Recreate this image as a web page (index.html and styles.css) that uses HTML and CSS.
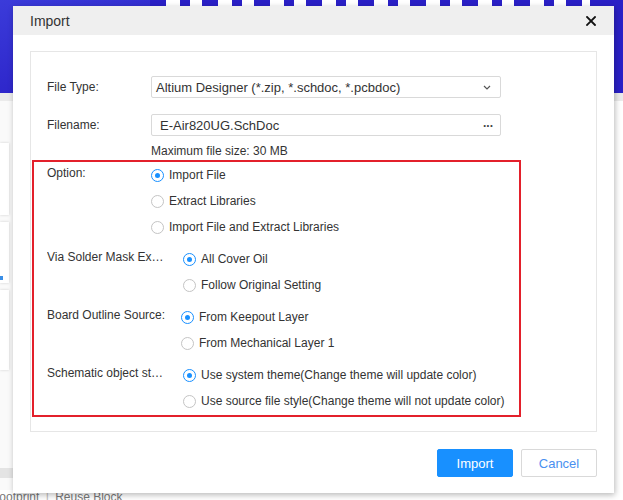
FILE: index.html
```html
<!DOCTYPE html>
<html lang="en">
<head>
<meta charset="utf-8">
<title>Import</title>
<link rel="stylesheet" href="styles.css">
</head>
<body>
<div class="page">
  <div class="banner"><div class="stripes"></div></div>
  <div class="subbar"></div>
  <div class="workspace">
    <div class="sidebar">
      <div class="card card-a"></div>
      <div class="card card-b"><span class="card-mark"></span></div>
      <div class="card card-c"></div>
      <div class="sidebar-bar"></div>
    </div>
    <div class="main"></div>
  </div>
  <div class="footer-links">Footprint <span class="sep">|</span> Reuse Block</div>
</div>

<div class="modal">
  <div class="modal-header">
    <span class="modal-title">Import</span>
    <span class="close">
      <svg width="10" height="10" viewBox="0 0 10 10"><path d="M1 1L9 9M9 1L1 9" stroke="#111" stroke-width="1.8" stroke-linecap="square" fill="none"/></svg>
    </span>
  </div>
  <div class="modal-body">
    <div class="panel">
      <div class="field-row">
        <div class="field-label">File Type:</div>
        <div class="select">
          <span>Altium Designer (*.zip, *.schdoc, *.pcbdoc)</span>
          <svg width="8" height="5" viewBox="0 0 8 5"><path d="M1 1L4 4L7 1" stroke="#555" stroke-width="1.2" fill="none"/></svg>
        </div>
      </div>
      <div class="field-row field-row-next">
        <div class="field-label">Filename:</div>
        <div class="input">
          <span>E-Air820UG.SchDoc</span>
          <span class="dots">...</span>
        </div>
      </div>
      <div class="hint">Maximum file size: 30 MB</div>

      <div class="highlight">
        <div class="group">
          <div class="group-label label-option">Option:</div>
          <div class="radios">
            <div class="radio-row"><span class="radio checked"></span>Import File</div>
            <div class="radio-row"><span class="radio"></span>Extract Libraries</div>
            <div class="radio-row"><span class="radio"></span>Import File and Extract Libraries</div>
          </div>
        </div>
        <div class="group">
          <div class="group-label label-via">Via Solder Mask Ex…</div>
          <div class="radios">
            <div class="radio-row"><span class="radio checked"></span>All Cover Oil</div>
            <div class="radio-row"><span class="radio"></span>Follow Original Setting</div>
          </div>
        </div>
        <div class="group">
          <div class="group-label label-board">Board Outline Source:</div>
          <div class="radios">
            <div class="radio-row"><span class="radio checked"></span>From Keepout Layer</div>
            <div class="radio-row"><span class="radio"></span>From Mechanical Layer 1</div>
          </div>
        </div>
        <div class="group">
          <div class="group-label label-schem">Schematic object st…</div>
          <div class="radios">
            <div class="radio-row"><span class="radio checked"></span>Use system theme(Change theme will update color)</div>
            <div class="radio-row"><span class="radio"></span>Use source file style(Change theme will not update color)</div>
          </div>
        </div>
      </div>
    </div>
    <div class="modal-footer">
      <button class="btn btn-primary">Import</button>
      <button class="btn btn-default">Cancel</button>
    </div>
  </div>
</div>
</body>
</html>
```

FILE: styles.css
```css
* { box-sizing: border-box; }

body {
  margin: 0;
  width: 623px;
  height: 500px;
  overflow: hidden;
  position: relative;
  background: #fff;
  font-family: "Liberation Sans", Arial, sans-serif;
  font-size: 12px;
  color: #333;
}

/* ---------- background page ---------- */
.page {
  display: flex;
  flex-direction: column;
  height: 500px;
}

.banner {
  height: 93px;
  background: #2a20c6;
  background-image: linear-gradient(160deg, rgba(90,110,255,0.35) 0, rgba(42,32,198,0) 40%);
}

.stripes {
  margin-left: 150px;
  width: 440px;
  height: 6px;
  background-color: #2a20c6;
  background-image: repeating-linear-gradient(to right, #2a20c6 0 16px, #ffffff 16px 30px, #2a20c6 30px 40px, #ffffff 40px 52px);
}

.subbar {
  height: 8px;
  background: #ebebeb;
}

.workspace {
  display: flex;
  height: 389px;
}

.sidebar {
  width: 14px;
  border-right: 1px solid #d6d6d6;
  background: #fafafa;
  display: flex;
  flex-direction: column;
  gap: 7px;
  padding-top: 42px;
}

.card {
  width: 9px;
  background: #fff;
  box-shadow: 0 0 3px rgba(0,0,0,0.18);
  position: relative;
}
.card-a { height: 72px; }
.card-b { height: 61px; }
.card-c { height: 80px; }

.card-mark {
  position: absolute;
  left: 0;
  top: 54px;
  width: 3px;
  height: 4px;
  background: #3a8ee6;
}

.sidebar-bar {
  margin-top: 91px;
  height: 10px;
  width: 13px;
  background: #e4e4e4;
}

.main { flex: 1; background: #fff; }

.footer-links {
  height: 10px;
  line-height: 14px;
  font-size: 12px;
  color: #777;
  text-indent: -8px;
  white-space: nowrap;
}
.sep { color: #bbb; padding: 0 3px; }

/* ---------- modal ---------- */
.modal {
  position: absolute;
  left: 13px;
  top: 6px;
  width: 601px;
  height: 487px;
  background: #fff;
  box-shadow: 1px 2px 6px rgba(0,0,0,0.28);
  display: flex;
  flex-direction: column;
}

.modal-header {
  height: 29px;
  background: #efefef;
  display: flex;
  align-items: center;
  justify-content: space-between;
  padding: 0 18px 0 17px;
}

.modal-title {
  font-size: 14px;
  color: #333;
}

.close {
  display: flex;
  width: 10px;
  height: 10px;
}

.modal-body {
  padding: 16px 17px 0 17px;
}

.panel {
  border: 1px solid #e6e6e6;
  padding: 24px 0 14px 16px;
}

.field-row {
  display: flex;
  align-items: center;
}
.field-row-next { margin-top: 16px; }

.field-label {
  width: 104px;
  color: #333;
}

.select, .input {
  width: 350px;
  height: 22px;
  border: 1px solid #d9d9d9;
  border-radius: 2px;
  display: flex;
  align-items: center;
  justify-content: space-between;
  color: #333;
}

.select {
  padding: 0 9px 0 4px;
  font-size: 13px;
}

.input {
  padding: 0 7px 0 8px;
  font-size: 13px;
}

.dots {
  font-weight: bold;
  font-size: 12px;
  color: #444;
  margin-top: -4px;
}

.hint {
  margin-top: 8px;
  padding-left: 104px;
  line-height: 14px;
  color: #333;
}

.highlight {
  margin-top: 2px;
  margin-left: -15px;
  width: 489px;
  border: 2px solid #e3202b;
  padding: 0 0 1px 13px;
}

.group {
  display: flex;
  align-items: flex-start;
}
.group + .group { margin-top: 6px; }

.group-label {
  line-height: 22px;
  white-space: nowrap;
  overflow: hidden;
}
.label-option { width: 104px; }
.label-via { width: 136px; }
.label-board { width: 134px; }
.label-schem { width: 136px; }

.radios {
  display: flex;
  flex-direction: column;
}

.radio-row {
  height: 26px;
  display: flex;
  align-items: center;
  white-space: nowrap;
  color: #333;
}

.radio {
  width: 13px;
  height: 13px;
  margin-right: 5px;
  border: 1px solid #c4c4c4;
  border-radius: 50%;
  display: grid;
  place-items: center;
  background: #fff;
}

.radio.checked { border-color: #1890ff; }
.radio.checked::after {
  content: "";
  width: 5px;
  height: 5px;
  border-radius: 50%;
  background: #1890ff;
}

.modal-footer {
  display: flex;
  justify-content: flex-end;
  gap: 8px;
  padding-top: 17px;
}

.btn {
  width: 76px;
  height: 28px;
  border-radius: 2px;
  font-family: "Liberation Sans", Arial, sans-serif;
  font-size: 13px;
  padding: 0;
  cursor: pointer;
}

.btn-primary {
  background: #1890ff;
  border: 1px solid #1890ff;
  color: #fff;
}

.btn-default {
  background: #fff;
  border: 1px solid #d9d9d9;
  color: #4a90f0;
}
```
